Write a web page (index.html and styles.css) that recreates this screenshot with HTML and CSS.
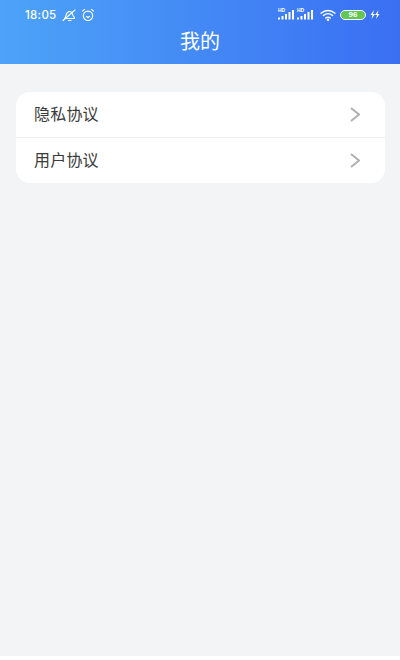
FILE: index.html
```html
<!DOCTYPE html>
<html lang="zh-CN">
<head>
  <meta charset="UTF-8">
  <meta name="viewport" content="width=device-width, initial-scale=1.0">
  <title>我的</title>
  <link rel="stylesheet" href="styles.css">
</head>
<body>
  <div class="page">
    <header class="header">
      <div class="status">
        <div class="status__left">
          <span class="status__time">18:05</span>
          <!-- muted bell -->
          <svg class="icon" width="14" height="14" viewBox="0 0 14 14" fill="none" stroke="#fff" stroke-width="1.1" stroke-linecap="round" stroke-linejoin="round">
            <path d="M2.500 10.500c1-.8 1.200-2.200 1.700-3.800C4.800 4.700 6.300 3.300 8 3.500c1.500.2 2.300 1.200 2.500 2.500.2 1.200.7 2.500 2 3.500v1z"/>
            <path d="M1 12.500 13 2"/>
            <path d="M6.500 12.500h2.500"/>
          </svg>
          <!-- alarm -->
          <svg class="icon" width="14" height="14" viewBox="0 0 14 14" fill="none" stroke="#fff" stroke-width="1.1" stroke-linecap="round">
            <circle cx="7" cy="7.800" r="4.700"/>
            <path d="M1.500 3.200 3.500 1.500M12.500 3.200 10.500 1.500"/>
            <path d="M5.500 8.500 7 9.500 8.500 8.500"/>
          </svg>
        </div>
        <div class="status__right">
          <div class="signal">
            <span class="signal__hd">HD</span>
            <svg width="17" height="11" viewBox="0 0 17 11" fill="#fff">
              <rect x="0" y="8.500" width="2" height="2"/>
              <rect x="3.500" y="7" width="2" height="3.500"/>
              <rect x="7" y="5" width="2" height="5.500"/>
              <rect x="10.500" y="3" width="2" height="7.500"/>
              <rect x="14" y="1" width="2" height="9.500"/>
            </svg>
          </div>
          <div class="signal">
            <span class="signal__hd">HD</span>
            <svg width="17" height="11" viewBox="0 0 17 11" fill="#fff">
              <rect x="0" y="8.500" width="2" height="2"/>
              <rect x="3.500" y="7" width="2" height="3.500"/>
              <rect x="7" y="5" width="2" height="5.500"/>
              <rect x="10.500" y="3" width="2" height="7.500"/>
              <rect x="14" y="1" width="2" height="9.500"/>
            </svg>
          </div>
          <svg class="wifi" width="16" height="12" viewBox="0 0 16 12" fill="none" stroke="#fff" stroke-width="1.300" stroke-linecap="round">
            <path d="M1 4.200C5 .6 11 .6 15 4.200"/>
            <path d="M3.300 6.600c2.800-2.400 6.600-2.400 9.400 0"/>
            <path d="M5.600 9c1.400-1.100 3.400-1.100 4.800 0"/>
            <circle cx="8" cy="10.800" r=".6" fill="#fff"/>
          </svg>
          <span class="battery">96</span>
          <svg width="10" height="9" viewBox="0 0 10 9" fill="#fff">
            <path d="M4 0 .5 5h2L1.500 9l3.500-5H3zM8.500 0 5 5h2L6 9l3.500-5h-2z"/>
          </svg>
        </div>
      </div>
      <h1 class="header__title">我的</h1>
    </header>

    <main class="content">
      <div class="card">
        <div class="card__row">
          <span class="card__label">隐私协议</span>
          <svg width="10" height="15" viewBox="0 0 10 15" fill="none" stroke="#b0b0b0" stroke-width="2">
            <path d="M1 1 9 7.500 1 14"/>
          </svg>
        </div>
        <div class="card__row">
          <span class="card__label">用户协议</span>
          <svg width="10" height="15" viewBox="0 0 10 15" fill="none" stroke="#b0b0b0" stroke-width="2">
            <path d="M1 1 9 7.500 1 14"/>
          </svg>
        </div>
      </div>
    </main>
  </div>
</body>
</html>
```

FILE: styles.css
```css
* {
  box-sizing: border-box;
}
html, body {
  margin: 0;
  height: 100%;
}
body {
  font-family: "Noto Sans CJK SC", "Noto Sans", sans-serif;
  background-color: #fff;
}
.page {
  height: 656px;
  overflow: hidden;
  display: flex;
  flex-direction: column;
  background-color: #f3f4f6;
}

/* header */
.header {
  height: 64px;
  flex-shrink: 0;
  background: linear-gradient(90deg, #4da3f8 0%, #3a6ff3 100%);
  color: #fff;
}
.status {
  height: 29px;
  padding: 0 20px 0 25px;
  display: flex;
  justify-content: space-between;
  align-items: center;
}
.status__left,
.status__right {
  display: flex;
  align-items: center;
}
.status__left {
  gap: 5px;
}
.status__right {
  gap: 2px;
}
.status__time {
  font-family: Inter, "Liberation Sans", sans-serif;
  font-size: 11.500px;
  font-weight: 500;
  letter-spacing: .3px;
}
.signal {
  position: relative;
  width: 17px;
  height: 11px;
  display: flex;
}
.signal__hd {
  position: absolute;
  top: -2px;
  left: 0;
  font-family: "Liberation Sans", sans-serif;
  font-size: 5px;
  font-weight: 700;
  line-height: 6px;
}
.wifi {
  margin: 0 2px 0 4px;
}
.battery {
  width: 26px;
  height: 10px;
  border: 1.500px solid #fff;
  border-radius: 5px;
  background-color: #62c554;
  font-family: "Liberation Sans", sans-serif;
  font-size: 8px;
  font-weight: 700;
  line-height: 7px;
  text-align: center;
  margin-right: 2px;
}
.header__title {
  margin: 0;
  font-size: 20px;
  font-weight: 400;
  line-height: 24px;
  text-align: center;
}

/* list */
.content {
  padding: 28px 15px 0 16px;
}
.card {
  border-radius: 14px;
  background-color: #fff;
}
.card__row {
  height: 45px;
  padding: 0 25px 0 18px;
  display: flex;
  justify-content: space-between;
  align-items: center;
  color: #3a3a3a;
}
.card__row + .card__row {
  height: 46px;
  border-top: 1px solid #eeeeee;
}
.card__label {
  font-size: 16px;
  line-height: 22px;
  letter-spacing: .2px;
  margin-bottom: 3px;
}
```
